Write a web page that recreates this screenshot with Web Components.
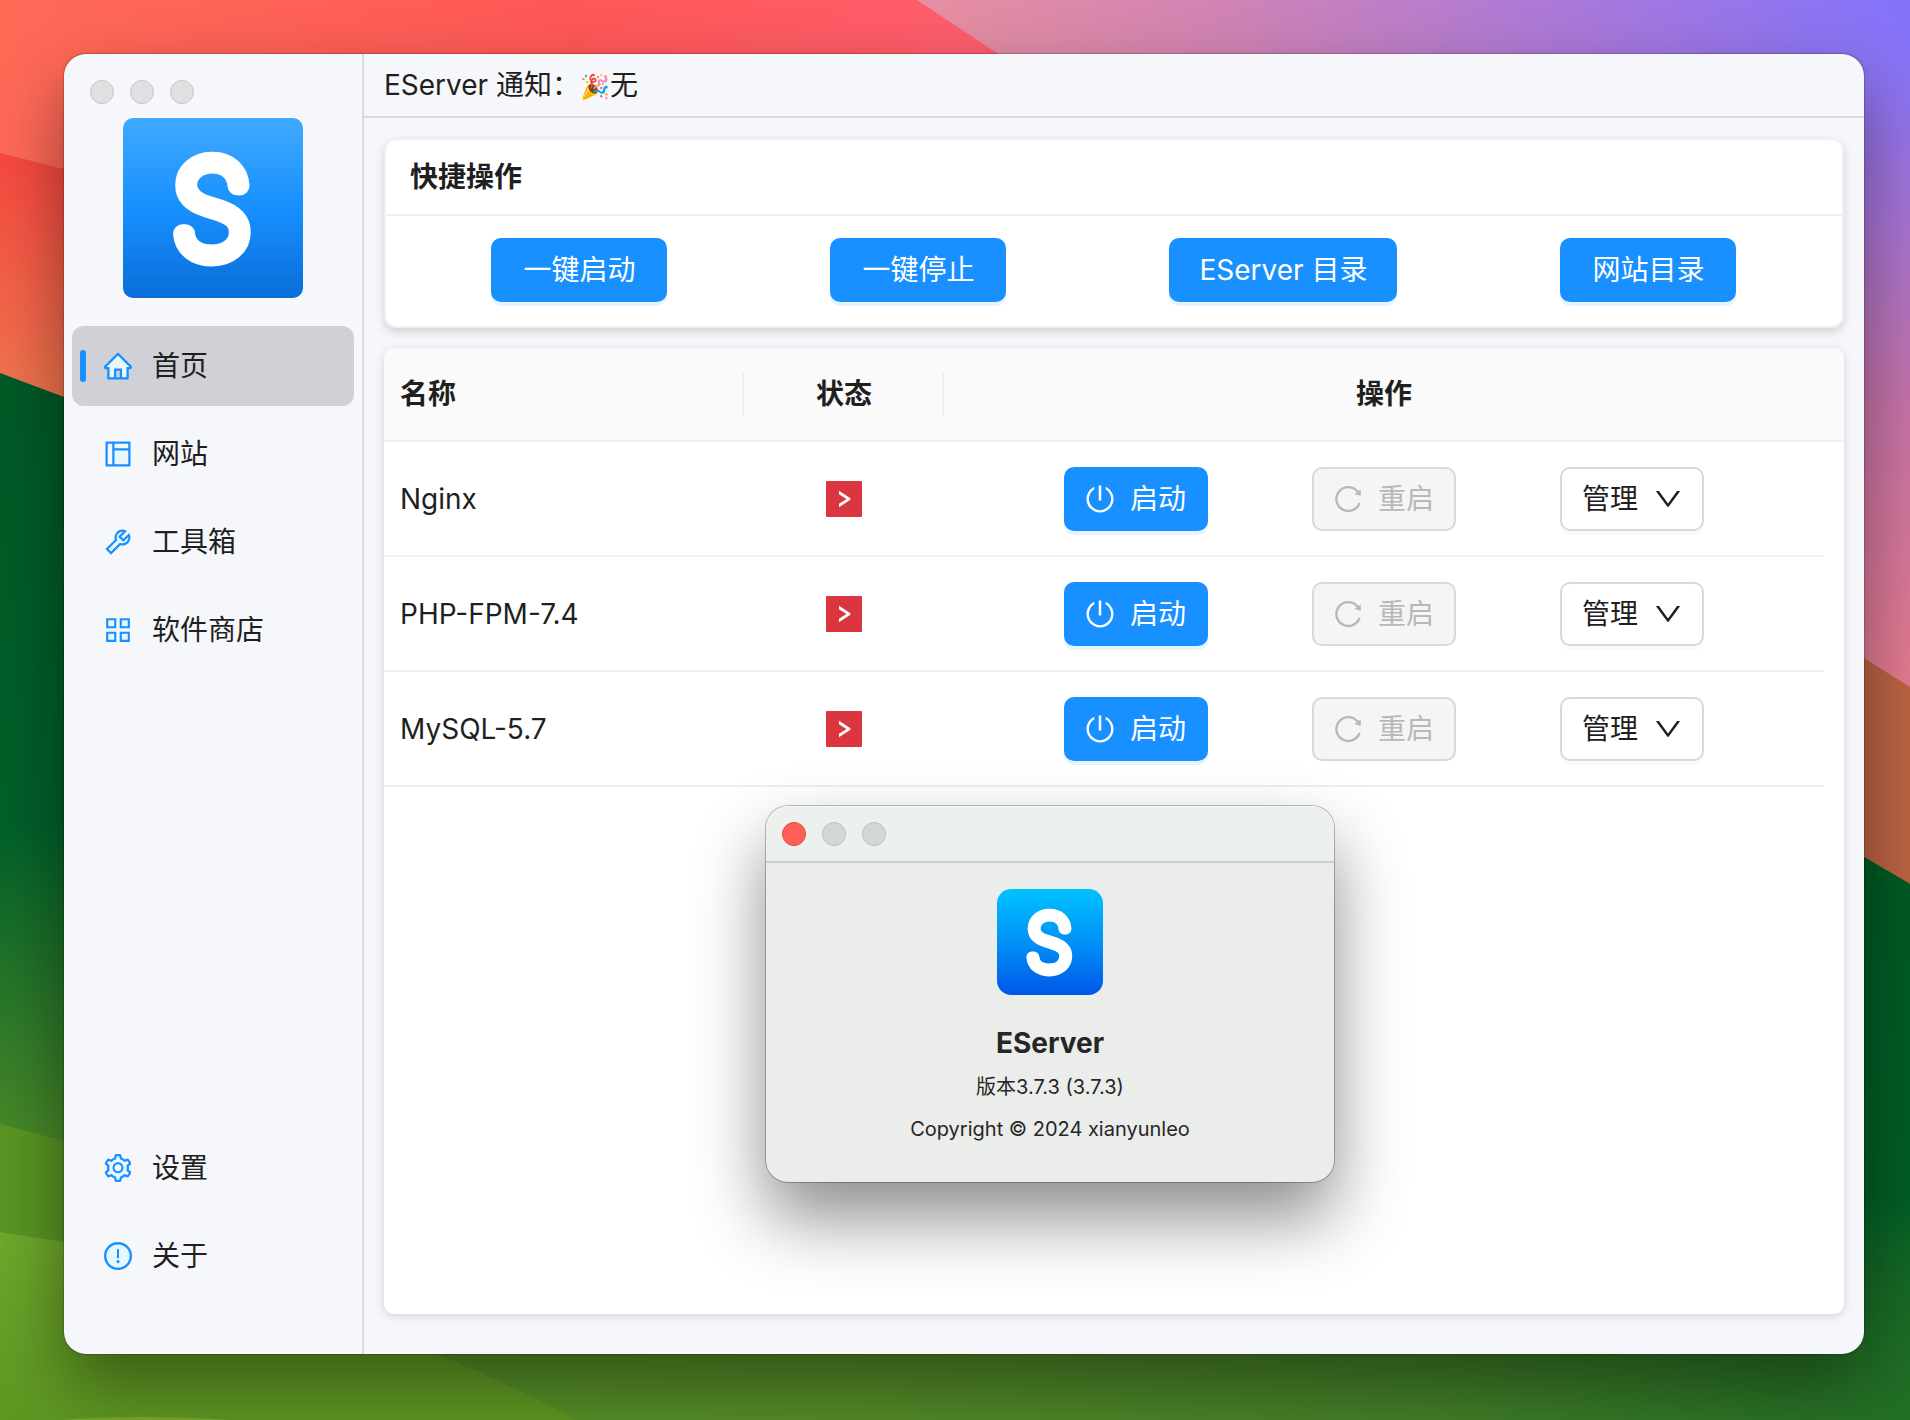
<!DOCTYPE html>
<html lang="zh-CN">
<head>
<meta charset="utf-8">
<title>EServer</title>
<style>
  html { height: 100%; }
  body {
    margin: 0;
    min-height: 100%;
    box-sizing: border-box;
    display: flex;
    padding: 54px 46px 66px 64px;
    position: relative;
    overflow: hidden;
    font-family: Inter, "Noto Sans CJK SC", "Noto Color Emoji", sans-serif;
    font-size: 28px;
    line-height: 44px;
    color: #1f1f1f;
    --primary: #1890ff;
    --line: #f0f0f0;
    --frame: #d9dbdc;
    --surface: #f5f7fb;
  }
  .emoji { font-size: 24px; }
</style>
</head>
<body>
<desktop-wallpaper></desktop-wallpaper>
<app-window>
  <side-nav slot="aside">
    <nav-item icon="home" active>首页</nav-item>
    <nav-item icon="layout">网站</nav-item>
    <nav-item icon="tool">工具箱</nav-item>
    <nav-item icon="appstore">软件商店</nav-item>
    <nav-item slot="bottom" icon="setting">设置</nav-item>
    <nav-item slot="bottom" icon="info">关于</nav-item>
  </side-nav>
  <notice-bar slot="header">EServer 通知：<span class="emoji">🎉</span>无</notice-bar>
  <quick-card>
    <span slot="title">快捷操作</span>
    <action-button size="wide">一键启动</action-button>
    <action-button size="wide">一键停止</action-button>
    <action-button size="wide">EServer 目录</action-button>
    <action-button size="wide">网站目录</action-button>
  </quick-card>
  <service-table services="Nginx,PHP-FPM-7.4,MySQL-5.7"></service-table>
</app-window>
<about-dialog>
  <span slot="name">EServer</span>
  <span slot="version">版本3.7.3 (3.7.3)</span>
  <span slot="copyright">Copyright © 2024 xianyunleo</span>
</about-dialog>

<script>
const define = (name, html, setup) => {
  const template = document.createElement('template');
  template.innerHTML = html;
  customElements.define(name, class extends HTMLElement {
    constructor() {
      super();
      this.attachShadow({ mode: 'open' }).append(template.content.cloneNode(true));
    }
    connectedCallback() {
      if (setup) setup(this, this.shadowRoot);
    }
  });
};

const ICONS = {
  home: '<path fill="#e6f7ff" d="M512.1 172.6l-370 369.7h96V868H392V640c0-22.100 17.900-40 40-40h160c22.100 0 40 17.900 40 40v228h153.900V542.300H882L535.200 195.700z"/><path d="M946.500 505L534.600 93.400a31.930 31.930 0 0 0-45.200 0L77.500 505c-12 12-18.800 28.300-18.800 45.300 0 35.300 28.700 64 64 64h43.400V908c0 17.700 14.300 32 32 32H824c17.700 0 32-14.300 32-32V614.300h43.400c17 0 33.300-6.700 45.300-18.800 24.900-25 24.900-65.500-.1-90.500zM568 868H456V664h112v204zm217.900-325.700V868H640V624c0-17.700-14.300-32-32-32H416c-17.700 0-32 14.300-32 32v244H238.100V542.300h-96l370-369.700L882 542.300h-96.100z"/>',
  layout: '<path fill="#e6f7ff" d="M408 408h432v432H408z"/><path fill-rule="evenodd" d="M112 144a32 32 0 0 1 32-32h736a32 32 0 0 1 32 32v736a32 32 0 0 1-32 32H144a32 32 0 0 1-32-32zM184 184v656h144V184zM400 184v144h440V184zM400 400v440h440V400z"/>',
  tool: '<path fill="#e6f7ff" d="M786 499.800c-58.100 58.100-145.300 69.300-214.600 33.600l-282.900 282.800-79.200-79.200L492.300 454c-35.700-69.300-24.500-156.500 33.600-214.600a184 184 0 0 1 144-53.500L537 318.900v45.300l124.500 124.500h45.300l132.800-132.800c3.700 51.800-14.400 104.800-53.600 143.900z"/><path d="M876.6 239.5c-.5-.9-1.2-1.8-2-2.5-5-5-13.1-5-18.1 0L684.2 409.3l-67.9-67.9L788.7 169c.8-.8 1.4-1.6 2-2.5 3.6-6.1 1.6-13.9-4.5-17.5-98.2-58-226.8-44.7-311.3 39.7-67 67-89.2 162-66.500 247.400l-293 293c-3 3-2.800 7.900.3 11l169.700 169.700c3.100 3.100 8.100 3.300 11 .3l292.900-292.900c85.500 22.800 180.500.7 247.600-66.400 84.400-84.500 97.700-213.100 39.700-311.300zM786 499.800c-58.100 58.100-145.300 69.300-214.600 33.600l-8.800 8.800-.1-.1-274 274.1-79.200-79.200 230.100-230.100s0 .1.1.1l52.800-52.800c-35.700-69.300-24.500-156.500 33.600-214.600a184.200 184.200 0 0 1 144-53.500L537 318.900a32.050 32.050 0 0 0 0 45.300l124.500 124.500a32.050 32.050 0 0 0 45.300 0l132.800-132.800c3.700 51.800-14.400 104.800-53.600 143.900z"/>',
  appstore: '<g fill="#e6f7ff" stroke="#1890ff" stroke-width="68"><path d="M166 166h258v258H166zM600 166h258v258H600zM166 600h258v258H166zM600 600h258v258H600z"/></g>',
  setting: '<circle cx="512" cy="512" r="300" fill="#e6f7ff"/><circle cx="512" cy="502" r="130" fill="#f5f7fb"/><path d="M924.8 625.7l-65.5-56c3.1-19 4.7-38.4 4.7-57.8s-1.6-38.8-4.7-57.8l65.5-56a32.03 32.03 0 0 0 9.3-35.2l-.9-2.6a443.74 443.74 0 0 0-79.7-137.9l-1.8-2.1a32.12 32.12 0 0 0-35.1-9.5l-81.3 28.9c-30-24.6-63.5-44-99.7-57.6l-15.7-85a32.05 32.05 0 0 0-25.8-25.7l-2.7-.5c-52.1-9.4-106.9-9.4-159 0l-2.7.5a32.05 32.05 0 0 0-25.8 25.7l-15.8 85.4a351.86 351.86 0 0 0-99 57.4l-81.9-29.1a32 32 0 0 0-35.1 9.5l-1.8 2.1a446.02 446.02 0 0 0-79.7 137.9l-.9 2.6c-4.5 12.5-.8 26.5 9.3 35.2l66.3 56.6c-3.1 18.8-4.6 38-4.6 57.1 0 19.2 1.5 38.4 4.6 57.1L99 625.5a32.03 32.03 0 0 0-9.3 35.2l.9 2.6c18.1 50.4 44.9 96.9 79.7 137.9l1.8 2.1a32.12 32.12 0 0 0 35.1 9.5l81.9-29.1c29.8 24.5 63.1 43.9 99 57.4l15.8 85.4a32.05 32.05 0 0 0 25.8 25.7l2.7.5a449.4 449.4 0 0 0 159 0l2.7-.5a32.05 32.05 0 0 0 25.8-25.7l15.700-85a350 350 0 0 0 99.700-57.600l81.300 28.900a32 32 0 0 0 35.100-9.500l1.800-2.100c34.800-41.100 61.600-87.500 79.700-137.900l.9-2.600c4.500-12.300.8-26.300-9.300-35zM788.300 465.900c2.500 15.100 3.800 30.600 3.800 46.100s-1.300 31-3.800 46.100l-6.600 40.100 74.700 63.900a370.030 370.030 0 0 1-42.600 73.600L721 702.800l-31.400 25.800c-23.900 19.600-50.500 35-79.300 45.800l-38.100 14.300-17.900 97a377.500 377.500 0 0 1-85 0l-17.900-97.200-37.800-14.500c-28.500-10.800-55-26.200-78.700-45.700l-31.400-25.900-93.400 33.200c-17-22.900-31.200-47.600-42.600-73.600l75.500-64.500-6.500-40c-2.400-14.900-3.700-30.300-3.700-45.500 0-15.300 1.200-30.600 3.700-45.500l6.500-40-75.500-64.500c11.300-26.100 25.600-50.700 42.600-73.600l93.400 33.200 31.400-25.900c23.700-19.500 50.200-34.900 78.700-45.700l37.900-14.300 17.900-97.200c28.100-3.200 56.800-3.200 85 0l17.900 97 38.100 14.300c28.700 10.800 55.400 26.200 79.300 45.800l31.400 25.800 92.800-32.900c17 22.900 31.200 47.600 42.600 73.600L781.800 426l6.500 39.900zM512 326c-97.200 0-176 78.800-176 176s78.800 176 176 176 176-78.800 176-176-78.800-176-176-176zm79.200 255.200A111.600 111.600 0 0 1 512 614c-29.900 0-58-11.700-79.200-32.800A111.600 111.600 0 0 1 400 502c0-29.900 11.700-58 32.800-79.200C454 401.600 482.100 390 512 390c29.900 0 58 11.600 79.200 32.800A111.600 111.600 0 0 1 624 502c0 29.900-11.700 58-32.800 79.200z"/>',
  info: '<circle cx="512" cy="512" r="410" fill="#e6f7ff" stroke="#1890ff" stroke-width="76"/><rect x="480" y="288" width="64" height="296" rx="8"/><circle cx="512" cy="688" r="48"/>',
  power: '<path d="M705.6 124.9a8 8 0 0 0-11.6 7.2v64.2c0 5.5 2.9 10.6 7.5 13.600a352.200 352.200 0 0 1 62.200 49.800c32.700 32.800 58.400 70.900 76.300 113.300a355 355 0 0 1 27.900 138.700c0 48.100-9.400 94.800-27.900 138.700a355.920 355.920 0 0 1-76.300 113.300 353.060 353.060 0 0 1-113.200 76.400c-43.800 18.600-90.500 28-138.500 28s-94.700-9.400-138.500-28a353.060 353.060 0 0 1-113.200-76.400A355.920 355.920 0 0 1 184 650.400a355 355 0 0 1-27.900-138.700c0-48.100 9.400-94.800 27.900-138.700 17.900-42.400 43.600-80.500 76.300-113.300 19-19 39.800-35.600 62.200-49.800 4.700-2.900 7.500-8.100 7.500-13.600V132c0-6-6.300-9.800-11.600-7.200C178.500 195.200 82 339.300 80 506.300 77.200 745.100 272.500 943.500 511.200 944c239 .5 432.800-193.300 432.800-432.400 0-169.200-97-315.700-238.400-386.700zM480 560h64c4.400 0 8-3.600 8-8V88c0-4.400-3.600-8-8-8h-64c-4.400 0-8 3.600-8 8v464c0 4.400 3.600 8 8 8z"/>',
  reload: '<path d="M909.1 209.3l-56.4 44.1C775.8 155.1 656.2 92 521.9 92 290 92 102.3 279.5 102 511.5 101.7 743.7 289.8 932 521.9 932c181.3 0 335.8-115 394.6-276.1 1.5-4.2-.7-8.9-4.9-10.3l-56.7-19.5a8 8 0 0 0-10.1 4.8c-1.800 5-3.800 10-5.900 14.900-17.300 41-42.100 77.800-73.700 109.400A344.770 344.770 0 0 1 655.900 829c-42.300 17.900-87.400 27-133.800 27-46.500 0-91.500-9.100-133.800-27A341.500 341.500 0 0 1 279 755.200a342.160 342.160 0 0 1-73.700-109.400c-17.900-42.400-27-87.400-27-133.900s9.100-91.500 27-133.900c17.300-41 42.100-77.800 73.700-109.400 31.600-31.600 68.400-56.400 109.300-73.800 42.300-17.900 87.400-27 133.800-27 46.500 0 91.500 9.100 133.800 27a341.500 341.500 0 0 1 109.300 73.800c9.900 9.900 19.200 20.400 27.800 31.400l-60.200 47a8 8 0 0 0 3 14.100l175.600 43c5 1.200 9.900-2.600 9.900-7.700l.8-180.900c-.1-6.600-7.800-10.300-13-6.200z"/>',
  down: '<path d="M884 256h-75c-5.100 0-9.900 2.500-12.900 6.600L512 654.200 227.900 262.600c-3-4.100-7.800-6.600-12.900-6.600h-75c-6.500 0-10.300 7.400-6.500 12.700l352.600 486.100c12.800 17.600 39 17.600 51.700 0l352.600-486.100c3.900-5.300.1-12.700-6.400-12.700z"/>'
};

define('ui-icon', `
<style>
  :host { display: block; flex: none; width: 32px; height: 32px; }
  svg { display: block; width: 100%; height: 100%; fill: currentColor; }
</style>
<svg viewBox="0 0 1024 1024" aria-hidden="true"></svg>`, (host, root) => {
  root.querySelector('svg').innerHTML = ICONS[host.getAttribute('name')];
});

define('desktop-wallpaper', `
<style>
  :host { position: absolute; inset: 0; z-index: -1; }
  svg { display: block; width: 100%; height: 100%; }
</style>
<svg viewBox="0 0 1910 1420" preserveAspectRatio="none" aria-hidden="true">
  <defs>
    <linearGradient id="red" x1="0" y1="0" x2="1" y2="0"><stop offset="0" stop-color="#ff6a57"/><stop offset=".3" stop-color="#ff5857"/><stop offset=".5" stop-color="#ff5d6c"/></linearGradient>
    <linearGradient id="rust" gradientUnits="userSpaceOnUse" x1="0" y1="150" x2="0" y2="400"><stop offset="0" stop-color="#f8473f"/><stop offset="1" stop-color="#f0764f"/></linearGradient>
    <linearGradient id="violet" gradientUnits="userSpaceOnUse" x1="960" y1="300" x2="1880" y2="-40"><stop offset="0" stop-color="#ec909c"/><stop offset=".35" stop-color="#d184b4"/><stop offset=".7" stop-color="#a878dc"/><stop offset="1" stop-color="#8473fa"/></linearGradient>
    <linearGradient id="rose" gradientUnits="userSpaceOnUse" x1="0" y1="0" x2="0" y2="680"><stop offset="0" stop-color="#8473fa" stop-opacity="0"/><stop offset=".25" stop-color="#9e74e0"/><stop offset=".6" stop-color="#c874a8"/><stop offset="1" stop-color="#e57b90"/></linearGradient>
    <linearGradient id="forest" gradientUnits="userSpaceOnUse" x1="0" y1="370" x2="0" y2="1150"><stop offset="0" stop-color="#005a26"/><stop offset=".58" stop-color="#00602a"/><stop offset="1" stop-color="#4b8a28"/></linearGradient>
    <linearGradient id="grass" gradientUnits="userSpaceOnUse" x1="0" y1="0" x2="1910" y2="0"><stop offset="0" stop-color="#599624"/><stop offset=".45" stop-color="#568c28"/><stop offset=".75" stop-color="#437f28"/><stop offset="1" stop-color="#216f26"/></linearGradient>
    <linearGradient id="pine" gradientUnits="userSpaceOnUse" x1="0" y1="860" x2="0" y2="1420"><stop offset="0" stop-color="#005a24"/><stop offset=".6" stop-color="#005e26"/><stop offset="1" stop-color="#216f26" stop-opacity="0"/></linearGradient>
    <linearGradient id="lime" gradientUnits="userSpaceOnUse" x1="0" y1="1230" x2="0" y2="1420"><stop offset="0" stop-color="#6fa92c"/><stop offset="1" stop-color="#5f9722"/></linearGradient>
  </defs>
  <rect width="1910" height="1420" fill="url(#red)"/>
  <path d="M0 153L64 169L400 260V600H0z" fill="url(#rust)"/>
  <path d="M917 0L1200 188V700H1910V0z" fill="url(#violet)"/>
  <path d="M1800 0H1910V700H1800z" fill="url(#rose)"/>
  <path d="M1700 560L1864 658L1910 687V900H1700z" fill="#bd6443"/>
  <path d="M0 373L64 397L400 520V1420H0z" fill="url(#forest)"/>
  <path d="M0 1124L64 1141L1864 1141V857L1910 884V1420H0z" fill="url(#grass)"/>
  <path d="M1864 857L1910 884V1420H1864z" fill="url(#pine)"/>
  <path d="M0 1232L64 1242Q400 1320 575 1420H0z" fill="url(#lime)"/>
  <path d="M60 1420Q140 1414 230 1420z" fill="#7aaa30"/>
</svg>`);

define('traffic-lights', `
<style>
  :host { display: flex; gap: 16px; }
  i { width: 24px; height: 24px; box-sizing: border-box; border-radius: 50%; background: var(--light, #dfe0e2); border: 1px solid var(--light-edge, #c3c4c6); }
  :host([focused]) i:first-of-type { background: #ff5f57; border-color: #e1483f; }
</style>
<i></i><i></i><i></i>`);

define('brand-logo', `
<style>
  :host { display: block; width: 180px; }
  svg { display: block; width: 100%; height: auto; }
  text { font: 100 128px Inter, sans-serif; font-optical-sizing: none; fill: #fff; stroke: #fff; stroke-width: 19px; stroke-linejoin: round; stroke-linecap: round; text-anchor: middle; }
</style>
<svg viewBox="0 0 180 180" role="img" aria-label="EServer">
  <defs><linearGradient id="g" x1="0" y1="0" x2="0" y2="1">
    <stop offset="0" stop-color="#40a9ff"/><stop offset=".5" stop-color="#1890ff"/><stop offset="1" stop-color="#096dd9"/>
  </linearGradient></defs>
  <rect width="180" height="180" rx="10" fill="url(#g)"/>
  <text x="89" y="138">S</text>
</svg>`, (host, root) => {
  if (host.getAttribute('tone') !== 'vivid') return;
  const tones = ['#00c3ff', '#0091f6', '#0058e8'];
  root.querySelectorAll('stop').forEach((stop, i) => stop.setAttribute('stop-color', tones[i]));
  root.querySelector('rect').setAttribute('rx', '24');
});

define('app-window', `
<style>
  :host {
    flex: 1; display: flex; overflow: hidden; border-radius: 22px; background: var(--surface);
    box-shadow: 0 0 2px rgba(0,0,0,.6), 0 32px 70px rgba(0,0,0,.42);
  }
  aside { flex: none; width: 298px; display: flex; border-right: 2px solid var(--frame); }
  .page { flex: 1; min-width: 0; display: flex; flex-direction: column; }
  main { flex: 1; display: flex; flex-direction: column; gap: 20px; padding: 20px 20px 40px; }
</style>
<aside><slot name="aside"></slot></aside>
<div class="page">
  <slot name="header"></slot>
  <main><slot></slot></main>
</div>`);

define('side-nav', `
<style>
  :host { flex: 1; display: flex; flex-direction: column; }
  traffic-lights { padding: 26px 26px 14px; }
  brand-logo { align-self: center; margin-bottom: 28px; }
  nav { flex: 1; display: flex; flex-direction: column; justify-content: space-between; padding: 0 8px 58px; }
  .group { display: flex; flex-direction: column; gap: 8px; }
</style>
<traffic-lights></traffic-lights>
<brand-logo></brand-logo>
<nav>
  <div class="group"><slot></slot></div>
  <div class="group"><slot name="bottom"></slot></div>
</nav>`);

define('nav-item', `
<style>
  :host { display: block; }
  a { display: flex; align-items: center; height: 80px; padding-left: 8px; border-radius: 12px; color: inherit; text-decoration: none; }
  a::before { content: ""; width: 6px; height: 32px; margin-right: 16px; border-radius: 3px; }
  ui-icon { margin-right: 18px; color: var(--primary); }
  :host([active]) a { background: #d0d1d6; }
  :host([active]) a::before { background: var(--primary); }
</style>
<a href="#"><ui-icon></ui-icon><slot></slot></a>`, (host, root) => {
  root.querySelector('ui-icon').replaceWith(Object.assign(document.createElement('template'),
    { innerHTML: `<ui-icon name="${host.getAttribute('icon')}"></ui-icon>` }).content);
});

define('notice-bar', `
<style>
  :host { display: block; padding: 9px 20px; border-bottom: 2px solid var(--frame); }
  p { margin: 0; height: 44px; white-space: nowrap; }
</style>
<p><slot></slot></p>`);

define('action-button', `
<style>
  :host { display: block; }
  button {
    display: flex; align-items: center; gap: 14px;
    box-sizing: border-box; height: 64px; padding: 0 18px; min-width: 144px;
    font: inherit; white-space: nowrap; border-radius: 10px;
    color: #fff; background: var(--primary); border: 2px solid var(--primary);
    box-shadow: 0 4px 0 rgba(5,145,255,.1);
  }
  :host([size="wide"]) button { justify-content: center; min-width: 176px; padding: 0 28px; }
  :host([kind="plain"]) button { justify-content: flex-end; color: #1f1f1f; background: #fff; border-color: #d9d9d9; box-shadow: 0 4px 0 rgba(0,0,0,.02); }
  button:disabled { color: #b8b8b8; background: #f5f5f5; border-color: #d9d9d9; box-shadow: none; }
</style>
<button type="button"><slot></slot></button>`, (host, root) => {
  const button = root.querySelector('button');
  button.disabled = host.hasAttribute('disabled');
  if (host.hasAttribute('menu')) button.setAttribute('aria-haspopup', 'menu');
});

define('quick-card', `
<style>
  :host { display: block; background: #fff; border: 2px solid var(--line); border-radius: 12px; box-shadow: 0 4px 10px rgba(0,0,0,.15); }
  h2 { margin: 0; padding: 15px 24px; font-size: 28px; line-height: 44px; font-weight: 600; border-bottom: 2px solid var(--line); }
  .body { display: flex; justify-content: space-around; padding: 22px 24px 24px; }
</style>
<h2><slot name="title"></slot></h2>
<div class="body"><slot></slot></div>`);

define('status-flag', `
<style>
  :host { display: block; width: 36px; height: 36px; margin: 0 auto; }
  svg { display: block; }
</style>
<svg width="36" height="36" viewBox="0 0 36 36" role="img" aria-label="已停止">
  <rect width="36" height="36" rx="1" fill="#db363f"/>
  <path d="M13 9.700L24.400 17.200V18.800L13 26.300V22.800L20.500 18L13 13.200z" fill="#fff"/>
</svg>`);

define('service-table', `
<style>
  :host { flex: 1; display: block; overflow: hidden; background: #fff; border-radius: 10px; box-shadow: 0 2px 10px rgba(0,0,0,.15); }
  table { width: 100%; border-collapse: separate; border-spacing: 0; table-layout: fixed; }
  th, td { box-sizing: border-box; padding: 0 16px; border-bottom: 2px solid var(--line); text-align: center; }
  th { height: 94px; font-weight: 600; background: #fafafa; }
  td { height: 115px; }
  th:first-child, td:first-child { text-align: left; }
  .split { background: linear-gradient(var(--line), var(--line)) right center / 2px 45px no-repeat #fafafa; }
  .gutter { padding: 0; }
  td.gutter { border: 0; }
  .ops { display: flex; justify-content: space-evenly; }
</style>
<table>
  <colgroup><col style="width:360px"><col style="width:200px"><col><col style="width:20px"></colgroup>
  <thead><tr><th class="split">名称</th><th class="split">状态</th><th>操作</th><th class="gutter"></th></tr></thead>
  <tbody></tbody>
</table>`, (host, root) => {
  root.querySelector('tbody').innerHTML = host.getAttribute('services').split(',').map(name => `
    <tr><td>${name}</td><td><status-flag></status-flag></td><td><div class="ops">
      <action-button><ui-icon name="power"></ui-icon>启动</action-button>
      <action-button disabled><ui-icon name="reload"></ui-icon>重启</action-button>
      <action-button kind="plain" menu>管理<ui-icon name="down"></ui-icon></action-button>
    </div></td><td class="gutter"></td></tr>`).join('');
});

define('about-dialog', `
<style>
  :host {
    position: absolute; left: 766px; top: 806px; width: 568px; overflow: hidden;
    border-radius: 22px; background: #ebedea; color: #262626;
    box-shadow: 0 0 0 1px rgba(0,0,0,.26), 0 36px 70px rgba(0,0,0,.45);
    --light: #d3d8d4; --light-edge: #bbc0bc;
  }
  header { padding: 16px 16px 15px; background: #edf1ed; border-bottom: 2px solid #cbcfcb; box-shadow: inset 0 1px 0 #f8faf8; }
  section { display: flex; flex-direction: column; align-items: center; padding: 26px 24px 32px; text-align: center; }
  brand-logo { width: 106px; margin-bottom: 28px; }
  h1 { margin: 0 0 3px; font-size: 28px; line-height: 40px; font-weight: 700; }
  p { margin: 0; font-size: 20px; line-height: 42px; }
</style>
<header><traffic-lights focused></traffic-lights></header>
<section>
  <brand-logo tone="vivid"></brand-logo>
  <h1><slot name="name"></slot></h1>
  <p><slot name="version"></slot></p>
  <p><slot name="copyright"></slot></p>
</section>`);
</script>
</body>
</html>
